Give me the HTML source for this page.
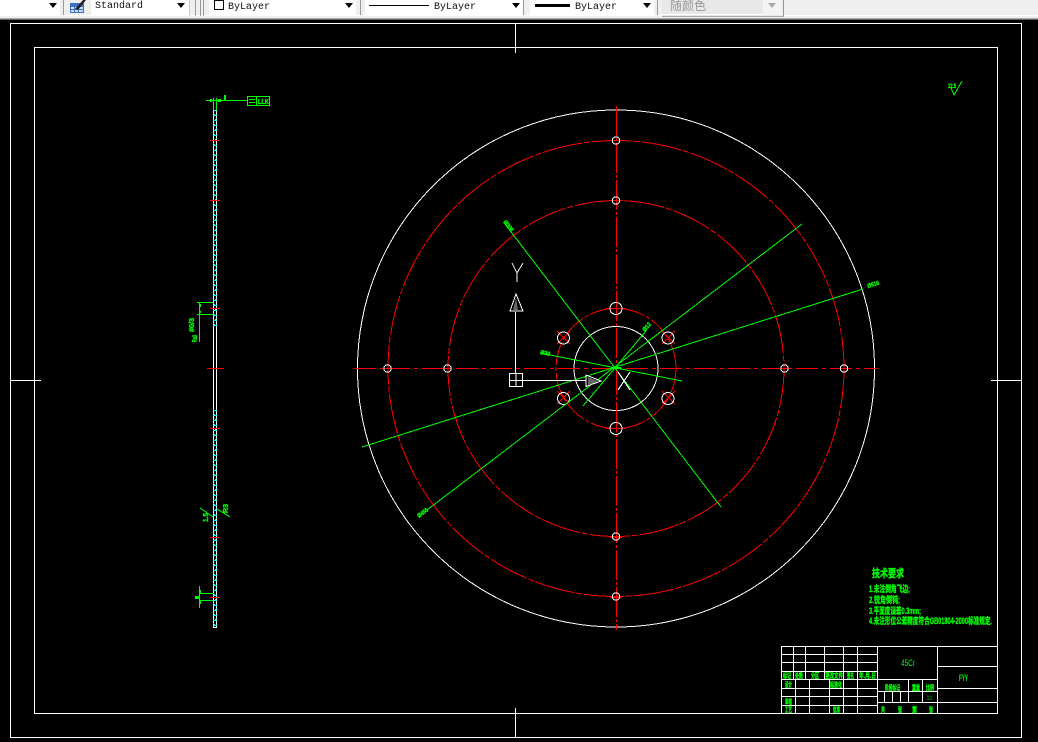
<!DOCTYPE html>
<html><head><meta charset="utf-8">
<style>
html,body{margin:0;padding:0;width:1038px;height:742px;overflow:hidden;background:#000}
svg{position:absolute;left:0;top:0;display:block}
.c{shape-rendering:crispEdges}
.g{font-family:"Liberation Sans","WenQuanYi Zen Hei","Noto Sans CJK SC",sans-serif;fill:#0f0;font-weight:bold;stroke:#0f0;stroke-width:.35}
.t{font-family:"Liberation Mono","Noto Sans CJK SC",monospace;font-size:10px;fill:#111}
</style></head><body>
<svg width="1038" height="742" viewBox="0 0 1038 742" xmlns="http://www.w3.org/2000/svg">
<defs>
<pattern id="h" x="213" y="110" width="4" height="10" patternUnits="userSpaceOnUse">
<rect x="0" y="0" width="4" height="1" fill="#0ff"/><rect x="0" y="3" width="1" height="1" fill="#0ff"/><rect x="1" y="4" width="1" height="1" fill="#0ff"/><rect x="0" y="5" width="4" height="1" fill="#0ff"/><rect x="3" y="8" width="1" height="1" fill="#0ff"/><rect x="2" y="9" width="1" height="1" fill="#0ff"/>
</pattern>
</defs>
<!-- toolbar -->
<g class="c">
<rect x="0" y="0" width="1038" height="18" fill="#efefef"/>
<rect x="0" y="15" width="1038" height="1" fill="#fff"/>
<rect x="0" y="18" width="1038" height="1" fill="#aaa"/>
<rect x="0" y="19" width="1038" height="1" fill="#666"/>
<rect x="0" y="0" width="60" height="15" fill="#fff"/>
<rect x="63" y="0" width="1" height="15" fill="#999"/>
<rect x="91" y="0" width="98" height="15" fill="#fff"/>
<rect x="189" y="0" width="1" height="16" fill="#ccc"/>
<rect x="195" y="0" width="1" height="16" fill="#999"/>
<rect x="200" y="0" width="1" height="16" fill="#999"/>
<rect x="203" y="0" width="1" height="16" fill="#999"/>
<rect x="209" y="0" width="147" height="15" fill="#fff"/>
<rect x="360" y="0" width="1" height="15" fill="#999"/>
<rect x="365" y="0" width="158" height="15" fill="#fff"/>
<rect x="523" y="0" width="1" height="15" fill="#999"/>
<rect x="530" y="0" width="124" height="15" fill="#fff"/>
<rect x="657" y="0" width="1" height="15" fill="#999"/>
<rect x="662" y="0" width="122" height="16" fill="#e8e8e8"/>
<rect x="662" y="14" width="101" height="1" fill="#fff"/>
<rect x="763" y="0" width="19" height="15" fill="#f4f4f4"/>
<rect x="783" y="0" width="1" height="17" fill="#999"/>
<rect x="662" y="16" width="122" height="1" fill="#aaa"/>
<!-- icon -->
<rect x="70" y="3" width="14" height="10" fill="#3f6fc0"/>
<rect x="71" y="7" width="3" height="2" fill="#cde"/><rect x="75" y="7" width="3" height="2" fill="#cde"/><rect x="79" y="7" width="4" height="2" fill="#cde"/>
<rect x="71" y="10" width="3" height="2" fill="#cde"/><rect x="75" y="10" width="3" height="2" fill="#cde"/><rect x="79" y="10" width="4" height="2" fill="#cde"/>
<!-- checkbox -->
<rect x="214.5" y="0.5" width="9" height="9" fill="#fff" stroke="#000"/>
<rect x="369" y="5" width="60" height="1" fill="#000"/>
<rect x="535" y="4" width="35" height="3" fill="#000"/>
</g>
<path d="M75 9L83 0H86L78 10Z" fill="#222"/>
<g fill="#000">
<path d="M49 3h8l-4 5z"/><path d="M177 3h8l-4 5z"/><path d="M345 3h8l-4 5z"/><path d="M512 3h8l-4 5z"/><path d="M643 3h8l-4 5z"/>
</g>
<path d="M768 3h8l-4 5z" fill="#aaa"/>
<text class="t" x="95" y="8">Standard</text>
<text class="t" x="228" y="9">ByLayer</text>
<text class="t" x="434" y="9">ByLayer</text>
<text class="t" x="575" y="9">ByLayer</text>
<text x="670" y="10" style="font-family:'WenQuanYi Zen Hei','Noto Sans CJK SC',sans-serif;font-size:12px;fill:#999">随颜色</text>

<!-- frames -->
<g class="c" fill="none" stroke="#fff">
<rect x="10.5" y="23.5" width="1011" height="714"/>
<rect x="34.5" y="47.5" width="963" height="666"/>
<path d="M515.5 23V53M515.5 708V738M10 380.5H41M991 380.5H1022"/>
</g>

<!-- side view -->
<g class="c" stroke="#fff" fill="none">
<path d="M213.5 110V628M216.5 110V628M213 627.5H217"/>
</g>
<rect x="213" y="110" width="4" height="217" fill="url(#h)" class="c"/>
<rect x="213" y="410" width="4" height="217" fill="url(#h)" class="c"/>
<g class="c" stroke="#f00">
<path d="M210 140.5H220M210 200.5H220M210 308.5H220M207 368.5H224M210 428.5H220M210 537.5H220M210 597.5H220"/>
</g>
<g class="c" stroke="#0f0" fill="none">
<path d="M206 100.5H247M213.5 98V110M216.5 98V110"/>
<rect x="247.5" y="96.5" width="22" height="9"/>
<path d="M256.5 96V106M249 99.5H255M249 102.5H255"/>
<path d="M197 302.5H213M197 314.5H213M199.5 302V342"/>
<path d="M199.5 586V608M199 593.5H213M199 600.5H213"/>
<path d="M200 508L213 517M217 509L230 517"/>
</g>
<g fill="#0f0" class="c">
<rect x="210" y="99" width="2" height="3"/><rect x="218" y="99" width="3" height="3"/><rect x="224" y="95" width="2" height="5"/>
<rect x="200" y="304" width="1" height="3"/><rect x="200" y="311" width="1" height="2"/>
<rect x="199" y="590" width="2" height="3"/><rect x="199" y="601" width="2" height="3"/><rect x="195" y="596" width="4" height="3"/>
</g>
<text class="g" font-size="7" textLength="7" lengthAdjust="spacingAndGlyphs" transform="translate(197,342) rotate(-90)">Ra3</text>
<text class="g" font-size="7" textLength="14" lengthAdjust="spacingAndGlyphs" transform="translate(194,332) rotate(-90)">#0/3</text>
<text class="g" x="258" y="104" font-size="7" textLength="11" lengthAdjust="spacingAndGlyphs">LLK</text>
<text class="g" font-size="7" textLength="9" lengthAdjust="spacingAndGlyphs" transform="translate(208,522) rotate(-90)">1.5</text>
<text class="g" font-size="7" textLength="9" lengthAdjust="spacingAndGlyphs" transform="translate(228,513) rotate(-90)">R3</text>

<!-- main circles -->
<g fill="none" class="c">
<circle cx="616" cy="368.5" r="258.5" stroke="#fff"/>
<circle cx="616" cy="368.5" r="228" stroke="#f00" stroke-dasharray="40 2 6 2"/>
<circle cx="616" cy="368.5" r="168" stroke="#f00" stroke-dasharray="40 2 6 2"/>
<circle cx="616" cy="368.5" r="60" stroke="#f00" stroke-dasharray="24 2 4 2"/>
<circle cx="616" cy="368.5" r="42" stroke="#fff"/>
</g>
<g class="c" fill="none" stroke="#f00">
<path d="M354 368.5H878" stroke-dasharray="22 4 4 4"/>
<path d="M616.5 106V630" stroke-dasharray="30 2 3 2"/>
<path d="M606 308.5H626M606 428.5H626M610 140.5H622M610 200.5H622M610 537.5H622M610 597.5H622M383 368.5H392M443 368.5H452M780 368.5H789M840 368.5H849"/>
<path d="M557 331L570 344M557 344L570 331M662 331L675 344M662 344L675 331M557 391L570 404M557 404L570 391M662 391L675 404M662 404L675 391"/>
</g>
<g fill="none" stroke="#fff" class="c">
<circle cx="616" cy="140.5" r="3.7"/><circle cx="616" cy="200.5" r="3.7"/><circle cx="616" cy="536.5" r="3.7"/><circle cx="616" cy="596.5" r="3.7"/>
<circle cx="387.5" cy="368.5" r="3.7"/><circle cx="447.5" cy="368.5" r="3.7"/><circle cx="784.5" cy="368.5" r="3.7"/><circle cx="844" cy="368.5" r="3.7"/>
<circle cx="616" cy="308.5" r="6"/><circle cx="616" cy="428.5" r="6"/>
<circle cx="563.5" cy="338" r="6"/><circle cx="668" cy="338" r="6"/><circle cx="563.5" cy="398.5" r="6"/><circle cx="668" cy="398.5" r="6"/>
</g>

<!-- green dims -->
<g stroke="#0f0" fill="none" class="c">
<path d="M505 224L721 507"/>
<path d="M802 224L427 510"/>
<path d="M863 289L362 447"/>
<path d="M540 353L682 381"/>
<path d="M646 331L583 406"/>
</g>
<rect x="611" y="367" width="10" height="2" fill="#0f0" class="c"/>
<g class="g" font-size="6">
<text textLength="13" lengthAdjust="spacingAndGlyphs" transform="translate(503,222) rotate(52)">Ø308</text>
<text textLength="12" lengthAdjust="spacingAndGlyphs" transform="translate(868,288) rotate(-17)">Ø516</text>
<text textLength="12" lengthAdjust="spacingAndGlyphs" transform="translate(419,518) rotate(-37)">Ø456</text>
<text textLength="10" lengthAdjust="spacingAndGlyphs" transform="translate(540,354) rotate(12)">Ø30</text>
<text textLength="10" lengthAdjust="spacingAndGlyphs" transform="translate(645,332) rotate(-50)">Ø12</text>
</g>
<path d="M951 88L954 95L962 81" stroke="#0f0" fill="none" class="c"/>
<text class="g" x="948" y="88" font-size="6" textLength="8" lengthAdjust="spacingAndGlyphs">12.5</text>

<!-- UCS -->
<g fill="none" stroke="#fff" class="c">
<path d="M512 263L517 273L523 263M517 273V282"/>
<path d="M515.500 312V373M523 380.500H586"/>
<path d="M516 294L510 311H523Z"/>
<path d="M586 375V386.500L601 381Z"/>
<path d="M618 372L630 390M630 372L618 390"/>
<rect x="509.500" y="373.500" width="13" height="13"/><path d="M516 373V387M509 380.500H523"/>
</g>
<path d="M516 298L513 310H518Z" fill="#666"/>
<path d="M588 377V385L598 381Z" fill="#666"/>

<!-- technical notes -->
<text class="g" x="872" y="577" font-size="11" textLength="32" lengthAdjust="spacingAndGlyphs">技术要求</text>
<g class="g" font-size="9">
<text x="869" y="592" textLength="41" lengthAdjust="spacingAndGlyphs">1.未注倒角飞边;</text>
<text x="869" y="603" textLength="31" lengthAdjust="spacingAndGlyphs">2.锐角倒钝;</text>
<text x="869" y="614" textLength="52" lengthAdjust="spacingAndGlyphs">3.平面度误差0.3mm;</text>
<text x="869" y="624" textLength="123" lengthAdjust="spacingAndGlyphs">4.未注形位公差精度符合GB01804-2000标准规定.</text>
</g>

<!-- title block -->
<g class="c" stroke="#fff" fill="none">
<rect x="781.500" y="646.500" width="216" height="67"/>
<path d="M781 654.500H877M781 662.500H877M781 671.500H877M781 679.500H877M781 688.500H877M781 696.500H877M781 705.500H877"/>
<path d="M793.500 646V679M805.500 646V679M824.500 646V679M843.500 646V713M857.500 646V713M877.500 646V713"/>
<path d="M795.500 679V713M809.500 679V713M829.500 679V713"/>
<path d="M937.500 646V713M937 666.500H997M937 688.500H997M937 702.500H997"/>
<path d="M877 679.500H937M877 691.500H937M877 702.500H937"/>
<path d="M908.500 679V702M922.500 679V702M884.500 691V702M892.500 691V702M900.500 691V702"/>
</g>
<g class="g" font-size="7">
<text x="783" y="678" textLength="8" lengthAdjust="spacingAndGlyphs">标记</text>
<text x="795" y="678" textLength="8" lengthAdjust="spacingAndGlyphs">处数</text>
<text x="811" y="678" textLength="8" lengthAdjust="spacingAndGlyphs">分区</text>
<text x="825" y="678" textLength="18" lengthAdjust="spacingAndGlyphs">更改文件</text>
<text x="847" y="678" textLength="7" lengthAdjust="spacingAndGlyphs">签名</text>
<text x="859" y="678" textLength="17" lengthAdjust="spacingAndGlyphs">年.月.日</text>
<text x="785" y="687" textLength="7" lengthAdjust="spacingAndGlyphs">设计</text>
<text x="830" y="687" textLength="12" lengthAdjust="spacingAndGlyphs">标准化</text>
<text x="785" y="704" textLength="7" lengthAdjust="spacingAndGlyphs">审核</text>
<text x="785" y="712" textLength="7" lengthAdjust="spacingAndGlyphs">工艺</text>
<text x="833" y="712" textLength="7" lengthAdjust="spacingAndGlyphs">批准</text>
<text x="885" y="690" textLength="15" lengthAdjust="spacingAndGlyphs">阶段标记</text>
<text x="912" y="690" textLength="8" lengthAdjust="spacingAndGlyphs">重量</text>
<text x="926" y="690" textLength="8" lengthAdjust="spacingAndGlyphs">比例</text>
<text x="881" y="712" textLength="4" lengthAdjust="spacingAndGlyphs">共</text>
<text x="898" y="712" textLength="4" lengthAdjust="spacingAndGlyphs">张</text>
<text x="912" y="712" textLength="5" lengthAdjust="spacingAndGlyphs">第</text>
<text x="929" y="712" textLength="4" lengthAdjust="spacingAndGlyphs">张</text>
</g>
<text x="901" y="666" font-size="9" textLength="14" lengthAdjust="spacingAndGlyphs" style="font-family:'Liberation Sans',sans-serif;fill:#0f0">45Cr</text>
<text x="927" y="700" font-size="6" textLength="5" lengthAdjust="spacingAndGlyphs" style="font-family:'Liberation Sans',sans-serif;fill:#0f0">1:1</text>
<text x="959" y="681" font-size="9" textLength="9" lengthAdjust="spacingAndGlyphs" style="font-family:'Liberation Sans',sans-serif;fill:#0f0;font-weight:bold">FYY</text>
</svg>
</body></html>
